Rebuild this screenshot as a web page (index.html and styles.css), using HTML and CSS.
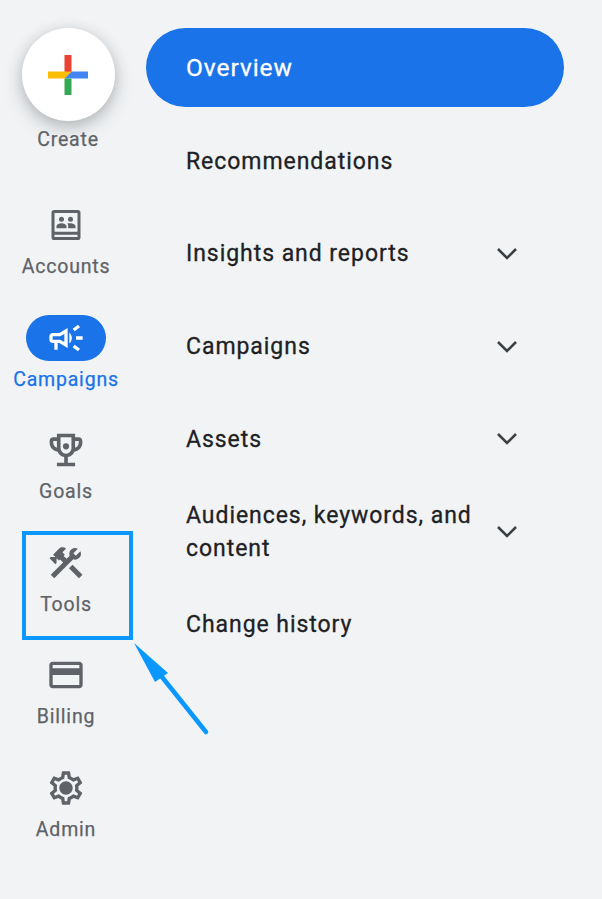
FILE: index.html
```html
<!DOCTYPE html>
<html lang="en">
<head>
    <meta charset="UTF-8">
    <meta name="viewport" content="width=device-width, initial-scale=1.0">
    <title>Google Ads - Navigation</title>
    <link rel="stylesheet" href="styles.css">
</head>
<body>
    <div class="page">

        <!-- Left rail -->
        <nav class="rail">
            <div class="rail-item create">
                <div class="create-btn">
                    <svg class="plus" viewBox="0 0 40 40">
                        <polygon fill="#ea4335" points="16.5,0 23.5,0 23.5,16.5 16.5,23.5"/>
                        <polygon fill="#4285f4" points="23.5,16.5 40,16.5 40,23.5 16.5,23.5"/>
                        <polygon fill="#34a853" points="16.5,23.5 23.5,23.5 23.5,40 16.5,40"/>
                        <polygon fill="#fbbc04" points="0,16.5 23.5,16.5 16.5,23.5 0,23.5"/>
                    </svg>
                </div>
                <span class="rail-label">Create</span>
            </div>

            <div class="rail-item">
                <svg class="icon" viewBox="0 0 24 24">
                    <path fill-rule="evenodd" d="M5 3h14a1.7 1.7 0 0 1 1.7 1.7v14.6A1.7 1.7 0 0 1 19 21H5a1.7 1.7 0 0 1-1.7-1.7V4.700A1.700 1.700 0 0 1 5 3zm.1 1.800v11.300h13.800V4.800H5.100zm0 13v1.400h13.800v-1.400H5.100z"/>
                    <circle cx="9.300" cy="8.600" r="1.500"/>
                    <circle cx="14.700" cy="8.600" r="1.500"/>
                    <path d="M6.300 14v-1.200c0-1.100 1.900-1.800 3-1.800s3 .7 3 1.800V14zM13.300 14v-1.400c0-.6-.2-1.100-.6-1.500.7-.1 1.500-.1 2-.1 1.100 0 3 .7 3 1.800V14z"/>
                </svg>
                <span class="rail-label">Accounts</span>
            </div>

            <div class="rail-item active">
                <div class="pill">
                    <svg class="icon" viewBox="0 0 24 24">
                        <path d="M18 11v2h4v-2h-4zm-2 6.610c.96.710 2.210 1.650 3.200 2.390.4-.53.8-1.070 1.200-1.600-.99-.74-2.240-1.680-3.200-2.400-.4.54-.8 1.080-1.200 1.610zM20.400 5.600c-.4-.53-.8-1.070-1.200-1.600-.99.74-2.240 1.680-3.200 2.400.4.53.8 1.070 1.200 1.600.96-.72 2.210-1.650 3.200-2.400zM4 9c-1.100 0-2 .9-2 2v2c0 1.100.9 2 2 2h1v4h2v-4h1l5 3V6L8 9H4zm5.030 1.710L11 9.530v4.940l-1.970-1.180-.48-.29H4v-2h4.550l.48-.29zM15.500 12c0-1.330-.58-2.530-1.500-3.350v6.690c.92-.81 1.500-2.010 1.500-3.340z"/>
                    </svg>
                </div>
                <span class="rail-label">Campaigns</span>
            </div>

            <div class="rail-item">
                <svg class="icon" viewBox="1 1 22 22">
                    <path fill-rule="evenodd" d="M19 5h-2V3H7v2H5c-1.100 0-2 .9-2 2v1c0 2.550 1.920 4.630 4.390 4.940.63 1.500 1.980 2.630 3.610 2.960V19H7v2h10v-2h-4v-3.100c1.630-.33 2.980-1.460 3.610-2.960C19.080 12.630 21 10.550 21 8V7c0-1.100-.9-2-2-2zM5 8V7h2v3.820C5.840 10.400 5 9.300 5 8zm14 0c0 1.300-.84 2.400-2 2.820V7h2v1zM9 5h6v6a3 3 0 0 1-6 0z"/>
                    <circle cx="12" cy="10" r="1.700"/>
                </svg>
                <span class="rail-label">Goals</span>
            </div>

            <div class="rail-item">
                <svg class="icon" viewBox="0 0 24 24">
                    <path d="M13.783 15.172l2.121-2.121 5.996 5.996-2.121 2.121-5.996-5.996zM17.500 10c1.930 0 3.500-1.570 3.500-3.500 0-.58-.16-1.120-.41-1.600l-2.700 2.700-1.490-1.490 2.700-2.700C18.620 3.160 18.080 3 17.500 3 15.570 3 14 4.570 14 6.500c0 .41.080.8.210 1.160l-1.850 1.850-1.780-1.780.71-.71-1.410-1.410L12 3.490c-1.170-1.170-3.070-1.170-4.240 0L4.220 7.030l1.410 1.410H2.810l-.71.710 3.540 3.540.71-.71V9.150l1.410 1.410.71-.71 1.780 1.780-7.410 7.410 2.120 2.120L16.340 9.790c.36.130.75.210 1.160.210z"/>
                </svg>
                <span class="rail-label">Tools</span>
            </div>

            <div class="rail-item">
                <svg class="icon" viewBox="0 0 24 24">
                    <path d="M20 4H4c-1.110 0-1.990.89-1.990 2L2 18c0 1.110.89 2 2 2h16c1.110 0 2-.89 2-2V6c0-1.110-.89-2-2-2zm0 14H4v-6h16v6zm0-10H4V6h16v2z"/>
                </svg>
                <span class="rail-label">Billing</span>
            </div>

            <div class="rail-item">
                <svg class="icon" viewBox="0 0 24 24">
                    <path d="M19.430 12.980c.04-.32.07-.64.07-.98 0-.34-.03-.66-.07-.98l2.110-1.650c.19-.15.24-.42.12-.64l-2-3.460c-.09-.16-.26-.25-.44-.25-.06 0-.12.01-.17.03l-2.490 1c-.52-.4-1.080-.73-1.690-.98l-.38-2.650C14.460 2.180 14.250 2 14 2h-4c-.25 0-.46.18-.49.42l-.38 2.650c-.61.25-1.170.59-1.690.98l-2.490-1c-.06-.02-.12-.03-.18-.03-.17 0-.34.09-.43.25l-2 3.460c-.13.22-.07.49.12.64l2.110 1.650c-.04.32-.07.65-.07.98 0 .33.03.66.07.98l-2.110 1.650c-.19.15-.24.42-.12.64l2 3.460c.09.16.26.25.44.25.06 0 .12-.01.17-.03l2.490-1c.52.4 1.080.73 1.690.98l.38 2.650c.03.24.24.42.49.42h4c.25 0 .46-.18.49-.42l.38-2.650c.61-.25 1.170-.59 1.690-.98l2.490 1c.06.02.12.03.18.03.17 0 .34-.09.43-.25l2-3.460c.12-.22.07-.49-.12-.64l-2.110-1.650zm-1.980-1.710c.04.31.05.52.05.73 0 .21-.02.43-.05.73l-.14 1.130.89.7 1.080.84-.7 1.210-1.270-.51-1.040-.42-.9.68c-.43.32-.84.56-1.250.73l-1.060.43-.16 1.130-.2 1.350h-1.400l-.19-1.350-.16-1.130-1.060-.43c-.43-.18-.83-.41-1.230-.71l-.91-.7-1.060.43-1.270.51-.7-1.210 1.080-.84.89-.7-.14-1.130c-.03-.31-.05-.54-.05-.74s.02-.43.05-.73l.14-1.130-.89-.7-1.080-.84.7-1.210 1.270.51 1.040.42.9-.68c.43-.32.84-.56 1.250-.73l1.060-.43.16-1.130.2-1.350h1.390l.19 1.350.16 1.130 1.060.43c.43.18.83.41 1.230.71l.91.7 1.060-.43 1.270-.51.7 1.210-1.070.85-.89.7.14 1.130zM12 8c-2.210 0-4 1.790-4 4s1.790 4 4 4 4-1.790 4-4-1.790-4-4-4z"/>
                </svg>
                <span class="rail-label">Admin</span>
            </div>
        </nav>

        <!-- Section menu -->
        <ul class="menu">
            <li class="menu-row selected"><span class="menu-text">Overview</span></li>
            <li class="menu-row"><span class="menu-text">Recommendations</span></li>
            <li class="menu-row">
                <span class="menu-text">Insights and reports</span>
                <svg class="chevron" viewBox="0 0 22 13"><path d="M2 2l9 9 9-9"/></svg>
            </li>
            <li class="menu-row">
                <span class="menu-text">Campaigns</span>
                <svg class="chevron" viewBox="0 0 22 13"><path d="M2 2l9 9 9-9"/></svg>
            </li>
            <li class="menu-row">
                <span class="menu-text">Assets</span>
                <svg class="chevron" viewBox="0 0 22 13"><path d="M2 2l9 9 9-9"/></svg>
            </li>
            <li class="menu-row">
                <span class="menu-text">Audiences, keywords, and content</span>
                <svg class="chevron" viewBox="0 0 22 13"><path d="M2 2l9 9 9-9"/></svg>
            </li>
            <li class="menu-row"><span class="menu-text">Change history</span></li>
        </ul>

        <!-- Annotation over the Tools item -->
        <div class="callout-box"></div>
        <svg class="callout-arrow" viewBox="0 0 90 100">
            <line x1="72" y1="89" x2="28" y2="34"/>
            <polygon points="0,0 21,39 34,30"/>
        </svg>
    </div>
</body>
</html>
```

FILE: styles.css
```css
* {
    margin: 0;
    padding: 0;
    box-sizing: border-box;
}

body {
    font-family: Roboto, "Liberation Sans", sans-serif;
    background: #f1f3f5;
}

.page {
    position: relative;
    display: flex;
    height: 899px;
    overflow: hidden;
}

/* left rail */
.rail {
    display: flex;
    flex-direction: column;
    align-items: center;
    gap: 39.6px;
    width: 132px;
    padding-top: 28.5px;
    flex-shrink: 0;
}

.rail-item {
    display: flex;
    flex-direction: column;
    align-items: center;
    gap: 11px;
}

.rail-label {
    font-size: 19.5px;
    font-weight: 400;
    line-height: 22px;
    letter-spacing: 0.8px;
    color: #5f6368;
    white-space: nowrap;
    -webkit-text-stroke: 0.25px currentColor;
}

.icon {
    display: block;
    width: 40px;
    height: 40px;
    fill: #5f6368;
}

.create {
    gap: 7.5px;
    margin-bottom: 14.9px;
    padding-left: 4px;
}

.create-btn {
    display: flex;
    align-items: center;
    justify-content: center;
    width: 93px;
    height: 93px;
    margin-top: -0.5px;
    border-radius: 50%;
    background: #fff;
    box-shadow: 0 4px 14px rgba(60, 64, 67, 0.28), 0 8px 22px rgba(60, 64, 67, 0.12);
}

.plus {
    display: block;
    width: 40px;
    height: 40px;
}

.pill {
    display: flex;
    align-items: center;
    justify-content: center;
    width: 80px;
    height: 46px;
    margin: -3px 0;
    border-radius: 23px;
    background: #1a73e8;
}

.pill .icon {
    fill: #fff;
}

.active .rail-label {
    color: #1a73e8;
}

/* section menu */
.menu {
    display: flex;
    flex-direction: column;
    gap: 13.7px;
    width: 418px;
    margin-left: 14px;
    padding-top: 28px;
    list-style: none;
}

.menu-row {
    display: flex;
    align-items: center;
    justify-content: space-between;
    height: 79px;
    padding: 0 46px 0 40px;
    flex-shrink: 0;
}

.menu-text {
    max-width: 300px;
    padding-top: 2px;
    font-size: 23px;
    font-weight: 400;
    line-height: 33px;
    letter-spacing: 0.95px;
    color: #202124;
    -webkit-text-stroke: 0.3px currentColor;
}

.selected {
    border-radius: 40px;
    background: #1a73e8;
}

.selected .menu-text {
    padding-top: 0;
    font-size: 24.5px;
    color: #fff;
}

.chevron {
    display: block;
    width: 22px;
    height: 13px;
    margin-top: 1px;
    fill: none;
    stroke: #3c4043;
    stroke-width: 2.6;
}

/* annotation */
.callout-box {
    position: absolute;
    left: 22px;
    top: 531px;
    width: 111px;
    height: 109px;
    border: 4.5px solid #0a98ff;
}

.callout-arrow {
    position: absolute;
    left: 134px;
    top: 643px;
    width: 90px;
    height: 100px;
    fill: #0a98ff;
    stroke: #0a98ff;
}

.callout-arrow line {
    stroke-width: 4.5;
    stroke-linecap: round;
}

.callout-arrow polygon {
    stroke: none;
}
```
